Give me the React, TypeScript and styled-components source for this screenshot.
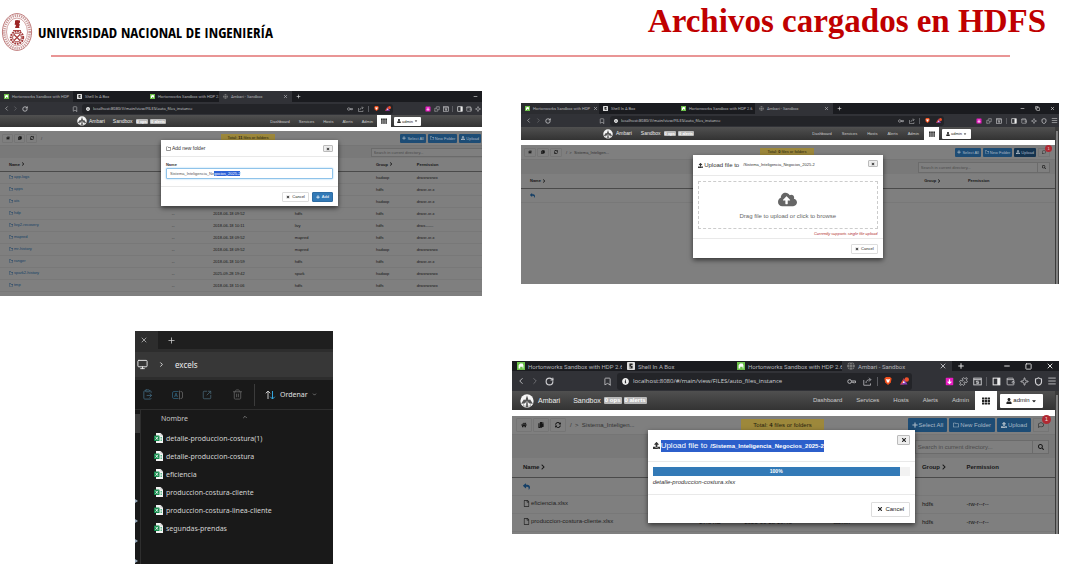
import React, { useEffect, useRef } from "react";
import styled, { createGlobalStyle, ThemeProvider, useTheme } from "styled-components";
import {
  Bookmark, ChevronLeft, ChevronRight, RotateCw, Puzzle, Wallet, Sparkle, Shield, Menu, Minus,
  Square, Copy, X, Plus, ClipboardPaste, SquareArrowOutUpRight, Trash2, Monitor, ChevronDown, ChevronUp,
} from "lucide-react";
import {
  FaHome, FaCopy, FaSyncAlt, FaReply, FaCloudUploadAlt, FaUpload, FaUser, FaTh, FaSearch,
  FaPlus, FaTimes, FaRegFolder, FaRegFile, FaRegComment, FaChevronRight, FaInfoCircle,
  FaCaretDown, FaGlobe,
} from "react-icons/fa";

const GlobalStyle = createGlobalStyle`
  *, *::before, *::after { box-sizing: border-box; }
  body { margin: 0; background: #fff; font-family: "Liberation Sans", Arial, sans-serif; }
  button, input { font: inherit; margin: 0; }
  svg { display: block; flex: none; }
`;

/* ---------- window scales ---------- */

const small = {
  font: 4, title: 5, urlFont: 4, icon: 6, tabH: 11, tabW: 73, tabPad: 4, fav: 5, barH: 13, slot: 9, left: 82, inner: 11,
  navH: 12, brandPad: 77, logo: 10, navFont: 4, linkGap: 9, gridW: 14, navRight: 77, adminH: 9, gap: 4,
  toolH: 14, box: 11, btnH: 9, btnPad: 2, searchH: 13, inputH: 9, headH: 13, rowH: 12, cellPad: 9,
  extra: 20,
};
const medium = {
  ...small,
  title: 6, tabW: 78, slot: 10, left: 89, inner: 11, navH: 13, brandPad: 82, linkGap: 10, gridW: 15,
  navRight: 84, adminH: 10, gap: 5, toolH: 14, box: 12, searchH: 15, inputH: 11, headH: 14, rowH: 14, extra: 0,
};
const large = {
  font: 6, title: 8, urlFont: 6, icon: 9, tabH: 10, tabW: 110, tabPad: 5, fav: 8, barH: 20, slot: 14, left: 105, inner: 16,
  navH: 19, brandPad: 8, logo: 14, navFont: 6, linkGap: 14, gridW: 22, navRight: 12, adminH: 14, gap: 6,
  toolH: 18, box: 16, btnH: 14, btnPad: 4, searchH: 24, inputH: 14, headH: 19, rowH: 18, cellPad: 11,
  extra: 0,
};
type Scale = typeof small;
declare module "styled-components" {
  export interface DefaultTheme extends Scale {}
}

/* ---------- slide ---------- */

const Slide = styled.main`
  min-height: 576px;
  background: #fff;
  overflow: hidden;
`;
const SlideHeader = styled.header`
  display: flex;
  justify-content: space-between;
  height: 55px;
  padding: 0 21px 0 1px;
`;
const Institution = styled.div`
  display: flex;
  align-items: center;
  gap: 5px;
  padding-top: 9px;
  font: 800 15px/18px "Open Sans Condensed", "Roboto Condensed", "Liberation Sans Narrow", sans-serif;
  color: #000;
  white-space: nowrap;
`;
const SlideTitle = styled.h1`
  margin: 2px 0 0;
  font: bold 33px/38px "Liberation Serif", "Times New Roman", serif;
  color: #c00000;
  white-space: nowrap;
`;
const Rule = styled.div`
  height: 2px;
  margin: 0 57px 0 51px;
  background: #e99595;
`;
const Columns = styled.div`
  display: grid;
  grid-template-columns: minmax(0, 482fr) minmax(0, 585fr);
`;
const LeftColumn = styled.div`
  display: flex;
  flex-direction: column;
  gap: 35px;
  padding-top: 34px;
`;
const RightColumn = styled.div`
  display: flex;
  flex-direction: column;
  gap: 77px;
  padding: 46px 8px 0 30px;
`;
const Inset = styled.div`
  padding-left: 9px;
`;

/* ---------- browser window ---------- */

const Window = styled.section`
  position: relative;
  overflow: hidden;
  font-size: ${(p) => p.theme.font}px;
  line-height: ${(p) => p.theme.font + 1}px;
  white-space: nowrap;
`;
const TabStrip = styled.div`
  display: flex;
  align-items: center;
  height: ${(p) => p.theme.tabH}px;
  background: #1a1b1f;
  color: #b4b4b8;
  font-family: Roboto, "Noto Sans", sans-serif;
`;
const Tab = styled.button<{ $tone: string }>`
  display: flex;
  align-items: center;
  gap: 3px;
  width: ${(p) => p.theme.tabW}px;
  height: 100%;
  padding: 0 ${(p) => p.theme.tabPad}px;
  border: 0;
  background: ${(p) => p.$tone};
  color: inherit;
  text-align: left;
`;
const TabLabel = styled.span`
  flex: 1;
`;
const NewTab = styled.span`
  padding-left: ${(p) => p.theme.tabPad}px;
  color: #ddd;
`;
const WindowButtons = styled.div`
  display: flex;
  align-items: center;
  gap: ${(p) => p.theme.slot}px;
  margin-left: auto;
  padding-right: ${(p) => p.theme.tabPad}px;
  color: #ddd;
`;
const AddressBar = styled.div`
  display: flex;
  align-items: center;
  height: ${(p) => p.theme.barH}px;
  background: #313237;
  color: #d0d0d3;
`;
const LeftTools = styled.div`
  display: flex;
  width: ${(p) => p.theme.left}px;
  padding: 0 3px 0 2px;
`;
const Slot = styled.span<{ $push?: boolean }>`
  display: flex;
  justify-content: center;
  align-items: center;
  width: ${(p) => p.theme.slot}px;
  margin-left: ${(p) => (p.$push ? "auto" : "0")};
`;
const Field = styled.div`
  display: flex;
  align-items: center;
  flex: 1;
  min-width: 0;
  height: ${(p) => p.theme.barH - 3}px;
  margin-right: 30px;
  border-radius: 3px;
  background: #232428;
`;
const FieldSlot = styled(Slot)`
  width: ${(p) => p.theme.inner}px;
`;
const UrlInput = styled.input`
  flex: 1;
  min-width: 0;
  height: ${(p) => p.theme.barH - 5}px;
  padding: 0;
  border: 0;
  background: none;
  color: #d0d0d4;
  font: ${(p) => p.theme.urlFont}px "Open Sans", "Noto Sans", sans-serif;
`;
const RightTools = styled.div`
  display: flex;
  align-items: center;
`;
const Divider = styled.i`
  width: 1px;
  height: ${(p) => p.theme.icon}px;
  margin: 0 2px;
  background: #5b5c61;
`;

/* ---------- Ambari ---------- */

const Page = styled.div`
  width: calc(100% + ${(p) => p.theme.extra}px);
  display: flex;
`;
const PageBody = styled.div`
  flex: 1;
  min-width: 0;
`;
const Scrollbar = styled.div`
  display: flex;
  flex-direction: column;
  width: 4px;
  background: #3b3b3b;
  padding-top: 1px;
`;
const Thumb = styled.i`
  flex: 1;
  margin: 3px 1px 0;
  background: #808080;
`;
const NavBar = styled.nav`
  display: flex;
  align-items: center;
  height: ${(p) => p.theme.navH}px;
  padding: 0 ${(p) => p.theme.navRight}px 0 ${(p) => p.theme.brandPad}px;
  background: linear-gradient(#505050, #333);
  font-size: ${(p) => p.theme.navFont}px;
`;
const Brand = styled.a`
  display: flex;
  align-items: center;
  gap: ${(p) => p.theme.gap - 2}px;
  margin-right: ${(p) => p.theme.linkGap - 1}px;
  font-size: ${(p) => p.theme.font + 1}px;
  color: #eee;
  text-decoration: none;
`;
const Badges = styled.span`
  display: flex;
  margin-left: -${(p) => p.theme.linkGap - 2}px;
`;
const CountBadge = styled.span`
  margin-left: 2px;
  padding: 0 1px;
  border-radius: 1px;
  background: #b9b9b9;
  color: #fff;
  font-weight: bold;
`;
const NavLinks = styled.div`
  display: flex;
  align-items: center;
  gap: ${(p) => p.theme.linkGap}px;
  height: 100%;
  margin-left: auto;
`;
const NavLink = styled.a`
  color: #ccc;
  text-decoration: none;
`;
const GridButton = styled.button`
  display: grid;
  place-items: center;
  width: ${(p) => p.theme.gridW}px;
  height: 100%;
  margin: 0 3px 0 ${(p) => p.theme.gap}px;
  padding: 0;
  border: 0;
  background: #fff;
  color: #222;
`;
const AdminButton = styled.button`
  display: flex;
  align-items: center;
  justify-content: center;
  gap: 1px;
  width: ${(p) => p.theme.gridW * 2 - 1}px;
  height: ${(p) => p.theme.adminH}px;
  padding: 0;
  border: 0;
  border-radius: 1px;
  background: #fff;
  color: #222;
`;
const WhiteGap = styled.div`
  height: ${(p) => p.theme.gap}px;
  background: #fff;
`;
const FilesView = styled.div<{ $height: number }>`
  min-height: ${(p) => p.$height}px;
  background: #7f7f7f;
  color: #161616;
`;
const FileToolbar = styled.div`
  display: grid;
  grid-template-columns: 1fr auto 1fr;
  align-items: center;
  height: ${(p) => p.theme.toolH}px;
  padding: 0 ${(p) => p.theme.gap}px 0 ${(p) => p.theme.gap - 2}px;
`;
const Crumbs = styled.div`
  display: flex;
  align-items: center;
  color: #333;
`;
const IconBox = styled.button`
  display: grid;
  place-items: center;
  width: ${(p) => p.theme.box}px;
  height: ${(p) => p.theme.btnH}px;
  margin-right: 1px;
  padding: 0;
  border: 1px solid #757575;
  border-radius: 1px;
  background: none;
  color: #161616;
`;
const Path = styled.span`
  padding-left: 3px;
`;
const Total = styled.div`
  padding: 0 ${(p) => p.theme.box - 4}px;
  line-height: ${(p) => p.theme.btnH - 1}px;
  background: #9d883b;
  color: #28240f;
`;
const Actions = styled.div`
  display: flex;
  justify-content: flex-end;
  gap: 2px;
`;
const Action = styled.button<{ $active?: boolean }>`
  display: flex;
  align-items: center;
  gap: 1px;
  height: ${(p) => p.theme.btnH}px;
  padding: 0 ${(p) => p.theme.btnPad}px;
  border: 0;
  border-radius: 1px;
  background: ${(p) => (p.$active ? "#14334f" : "#1d4c75")};
  color: #a9b8c5;
`;
const Messages = styled.button`
  position: relative;
  display: grid;
  place-items: center;
  width: ${(p) => p.theme.box}px;
  height: ${(p) => p.theme.btnH}px;
  padding: 0;
  border: 1px solid #757575;
  background: none;
  color: #222;
`;
const Unread = styled.span`
  position: absolute;
  top: -4px;
  right: -3px;
  width: ${(p) => p.theme.font + 3}px;
  line-height: ${(p) => p.theme.font + 3}px;
  border-radius: 50%;
  background: #b02a33;
  color: #ecd5d5;
  text-align: center;
`;
const SearchRow = styled.div`
  display: flex;
  align-items: center;
  justify-content: flex-end;
  height: ${(p) => p.theme.searchH}px;
  padding-right: ${(p) => p.theme.gap}px;
  border-top: 1px solid #757575;
  background: #797979;
`;
const SearchBox = styled.label`
  display: flex;
  align-items: center;
  width: 25%;
  height: ${(p) => p.theme.inputH}px;
  border: 1px solid #6b6b6b;
  background: #7f7f7f;
`;
const SearchInput = styled.input`
  flex: 1;
  min-width: 0;
  height: 100%;
  padding: 0 2px;
  border: 0;
  background: none;
  &::placeholder { color: #4b4b4b; }
`;
const SearchIcon = styled.span`
  display: grid;
  place-items: center;
  width: ${(p) => p.theme.box}px;
  height: 100%;
  border-left: 1px solid #6b6b6b;
`;
const FileTable = styled.table`
  width: 100%;
  table-layout: fixed;
  border-collapse: collapse;
  th, td { padding: 0; text-align: left; }
  th { height: ${(p) => p.theme.headH}px; border-bottom: 1px solid #4a4a4a; }
  td { height: ${(p) => p.theme.rowH}px; border-bottom: 1px solid #787878; }
  th:first-child, td:first-child { padding-left: ${(p) => p.theme.cellPad}px; }
`;
const Column = styled.col<{ $w: string }>`
  width: ${(p) => p.$w};
`;
const Flexed = styled.span`
  display: inline-flex;
  align-items: center;
  gap: 1px;
`;
const FolderLink = styled.a<{ $plain?: boolean }>`
  display: inline-flex;
  align-items: center;
  gap: 1px;
  color: ${(p) => (p.$plain ? "#222" : "#153f66")};
  text-decoration: none;
`;

/* ---------- dialogs ---------- */

const Dialog = styled.div<{ $top: number; $left: string; $width: string }>`
  position: absolute;
  top: ${(p) => p.$top}px;
  left: ${(p) => p.$left};
  width: ${(p) => p.$width};
  background: #fff;
  color: #333;
  box-shadow: 0 2px 5px rgba(0, 0, 0, 0.6);
`;
const DialogHead = styled.div<{ $h: number }>`
  display: flex;
  align-items: center;
  justify-content: space-between;
  height: ${(p) => p.$h}px;
  padding: 0 5px;
  border-bottom: 1px solid #e9e9e9;
  font-size: ${(p) => p.theme.title}px;
  line-height: ${(p) => p.theme.title + 2}px;
`;
const DialogTitle = styled.span`
  display: flex;
  align-items: center;
  gap: 1px;
`;
const PathName = styled.span`
  padding-left: 3px;
  font-size: ${(p) => p.theme.font}px;
`;
const Selected = styled.span`
  padding: 1px 0;
  background: #2c5fcb;
  color: #fff;
  ${PathName} { font-weight: bold; }
`;
const Close = styled.button`
  display: grid;
  place-items: center;
  align-self: flex-start;
  width: ${(p) => p.theme.icon + 4}px;
  height: ${(p) => p.theme.icon + 1}px;
  margin-top: 5px;
  padding: 0;
  border: 1px solid #bbb;
  border-radius: 1px;
  background: #eee;
  color: #222;
`;
const DialogBody = styled.div<{ $h: number }>`
  display: flex;
  flex-direction: column;
  height: ${(p) => p.$h}px;
  padding: 5px 5px 0;
  border-bottom: 1px solid #e9e9e9;
`;
const FieldLabel = styled.label`
  display: flex;
  flex-direction: column;
  gap: 1px;
  font-weight: bold;
`;
const NameInput = styled.input`
  width: 100%;
  height: 11px;
  padding: 0 3px;
  border: 1px solid #8fc3ea;
  border-radius: 1px;
  outline: 0;
  box-shadow: 0 0 2px #9accf0;
  color: #555;
  font-weight: normal;
  &::selection { background: #2c62d6; color: #fff; }
`;
const DialogFoot = styled.div<{ $h: number }>`
  display: flex;
  align-items: center;
  justify-content: flex-end;
  gap: 3px;
  height: ${(p) => p.$h}px;
  padding: 0 5px;
`;
const FootButton = styled.button<{ $primary?: boolean }>`
  display: flex;
  align-items: center;
  gap: 2px;
  height: ${(p) => p.theme.btnH + 1}px;
  padding: 0 ${(p) => p.theme.btnPad + 1}px;
  border: 1px solid ${(p) => (p.$primary ? "#2e6da4" : "#ddd")};
  border-radius: 1px;
  background: ${(p) => (p.$primary ? "#337ab7" : "#fff")};
  color: ${(p) => (p.$primary ? "#fff" : "#222")};
`;
const DropZone = styled.button`
  display: flex;
  flex-direction: column;
  align-items: center;
  justify-content: center;
  gap: 3px;
  width: 100%;
  height: 48px;
  border: 1px dashed #ccc;
  background: #fff;
  color: #666;
  font-size: ${(p) => p.theme.title}px;
  line-height: 8px;
`;
const Warning = styled.em`
  align-self: flex-end;
  padding-top: 2px;
  color: #b02a2a;
`;
const Track = styled.div`
  height: 9px;
  margin-bottom: 3px;
  background: #f2f2f2;
`;
const Fill = styled.div`
  width: 96%;
  line-height: 9px;
  background: #337ab7;
  color: #fff;
  font-size: 5px;
  font-weight: bold;
  text-align: center;
`;

/* ---------- drawings ---------- */

const Seal = () => (
  <svg width="32" height="40" viewBox="0 0 32 40" role="img" aria-label="UNI">
    <ellipse cx="16" cy="20" rx="14.6" ry="18.4" fill="#fff" stroke="#c07c7c" strokeWidth="1" />
    <ellipse cx="16" cy="20" rx="12.7" ry="16.4" fill="none" stroke="#cb9c9c" strokeWidth="2.6" strokeDasharray="1.3 .9" />
    <ellipse cx="16" cy="20" rx="10.5" ry="14" fill="#fff" stroke="#c07c7c" strokeWidth=".7" />
    <path d="M14 8.500l2-.5 3 .5v2l-1 1 1 1.500-1 1 .5 2H14l1-3-1.500-.5.500-1.500z" fill="#9c2626" />
    <path d="M12 18.500h8" stroke="#b35050" />
    <circle cx="16" cy="25.500" r="6.200" fill="none" stroke="#a43a3a" strokeWidth="2" strokeDasharray="1.800 .8" />
    <circle cx="16" cy="25.500" r="4.400" fill="none" stroke="#a43a3a" strokeWidth="1" />
    <path d="M13 28.500l6-6M13 22.500l6 6" stroke="#a43a3a" strokeWidth="1.100" />
  </svg>
);
const AmbariLogo = ({ size }: { size: number }) => (
  <svg width={size} height={size} viewBox="0 0 20 20">
    <circle cx="10" cy="10" r="9.500" fill="#f6f6f6" />
    <path d="M10 2l2.200 6.500L14.500 8l4 6-5-.5L10 10.500 6.500 13.500l-5 .5 4-6 2.300.5z" fill="#555" />
    <path d="M10 11.500l1.500 7h-3zM5 15l1 3M15 15l-1 3" fill="#555" stroke="#555" />
  </svg>
);
const Elephant = ({ size }: { size: number }) => (
  <svg width={size} height={size} viewBox="0 0 10 10">
    <rect width="10" height="10" fill="#6cc04a" />
    <path d="M2 8V4l2-2h3l1 2v4H7V6H4v2z" fill="#fff" />
  </svg>
);
const ShellIcon = ({ size }: { size: number }) => (
  <svg width={size} height={size} viewBox="0 0 10 10">
    <rect width="10" height="10" rx="1" fill="#ddd" />
    <path d="M3 2h4v2H5v1h2v3H3V7h2V6H3z" fill="#222" />
  </svg>
);
const Brave = ({ size }: { size: number }) => (
  <svg width={size} height={size} viewBox="0 0 10 10">
    <path d="M2.500 0h5L9.500 2 8.500 7 5 10 1.500 7 .5 2z" fill="#f4511e" />
    <path d="M2.500 2.500L5 3l2.500-.5L6.500 6 5 7.500 3.500 6z" fill="#fff" />
  </svg>
);
const Bat = ({ size }: { size: number }) => (
  <svg width={size + 1} height={size} viewBox="0 0 12 10">
    <path d="M5 1L0 9.500h5z" fill="#e8452c" />
    <path d="M5 1l5 8.500H0l5-3z" fill="#8b3fb5" />
    <path d="M5 4.500l1.500 3h-3z" fill="#fff" />
    <circle cx="9" cy="3" r="3" fill="#f0512b" />
  </svg>
);
const KeyIcon = ({ size }: { size: number }) => (
  <svg width={size} height={size} viewBox="0 0 12 12" fill="none" stroke="#b5b5b8" strokeWidth="1.300">
    <circle cx="3.500" cy="6" r="2.500" />
    <path d="M6 5.300h5.500V8M6 7h3.500v1.500" />
  </svg>
);
const ShareTray = ({ size }: { size: number }) => (
  <svg width={size} height={size} viewBox="0 0 12 12" fill="none" stroke="#b5b5b8" strokeWidth="1.100">
    <path d="M1 4v7h9V8.500M4 8c0-3 2-4.500 6-4.500M8 1l2.500 2.500L8 6" />
  </svg>
);
const Download = ({ size }: { size: number }) => (
  <svg width={size} height={size} viewBox="0 0 12 12">
    <rect x="1" y="1" width="10" height="10" rx="1" fill="#e81cc0" />
    <path d="M6 3v5.500M3.500 6.200L6 8.700l2.500-2.500" fill="none" stroke="#fff" strokeWidth="1.600" />
  </svg>
);
const NotesBox = ({ size }: { size: number }) => (
  <svg width={size} height={size} viewBox="0 0 12 12" fill="none" stroke="currentColor" strokeWidth="1.200">
    <rect x="1" y="1.500" width="10" height="9" />
    <path d="M1 3.500h10M7.500 5.500h-3v1.300h3v1.700h-3" />
  </svg>
);
const SidePanel = ({ size }: { size: number }) => (
  <svg width={size} height={size} viewBox="0 0 12 12">
    <rect x="1.500" y="1.500" width="9" height="9" fill="none" stroke="#eee" strokeWidth="1.300" />
    <path d="M7 1.500h3.500v9H7z" fill="#eee" />
  </svg>
);
const ExcelIcon = () => (
  <svg width="9" height="10" viewBox="0 0 18 20">
    <path d="M4 0h9l5 5v15H4z" fill="#f3f3f3" />
    <path d="M13 0v5h5" fill="#c9c9c9" />
    <rect x="0" y="5" width="11" height="11" rx="1" fill="#13894b" />
    <path d="M3 7.500l5 6M8 7.500l-5 6" stroke="#fff" strokeWidth="1.700" />
    <path d="M13 9h3M13 12h3M13 15h3" stroke="#21a366" strokeWidth="1.500" />
  </svg>
);
const SortIcon = () => (
  <svg width="11" height="10" viewBox="0 0 22 20" fill="none" strokeWidth="2">
    <path d="M6 18V2M1.500 6.500L6 2l4.500 4.500" stroke="#c8c8c8" />
    <path d="M15 2v16M10.500 13.500L15 18l4.500-4.500" stroke="#35a5dc" />
  </svg>
);
const RenameIcon = () => (
  <svg width="11" height="10" viewBox="0 0 22 20" fill="none" strokeWidth="1.600">
    <path d="M13 3H4a3 3 0 00-3 3v8a3 3 0 003 3h9M5 14l3-8 3 8M6 11.500h4" stroke="#2f5f78" />
    <path d="M15 1v18M17 3h1a3 3 0 013 3v8a3 3 0 01-3 3h-1" stroke="#666" />
  </svg>
);

/* ---------- composed browser ---------- */

const TabBar = ({ cropped }: { cropped: boolean }) => {
  const t = useTheme();
  const big = t.font > 4;
  const x = t.fav;
  return (
    <TabStrip>
      <Tab $tone={big ? "#1a1b1f" : "#2b2c30"}>
        <Elephant size={t.fav} />
        <TabLabel>Hortonworks Sandbox with HDP{big && " 2.6"}</TabLabel>
        {!big && <X size={x} strokeWidth={3} />}
      </Tab>
      <Tab $tone="#1a1b1f"><ShellIcon size={t.fav} /><TabLabel>Shell In A Box</TabLabel></Tab>
      <Tab $tone="#1a1b1f"><Elephant size={t.fav} /><TabLabel>Hortonworks Sandbox with HDP 2.6</TabLabel></Tab>
      <Tab $tone="#313237">
        <FaGlobe size={t.fav} color="#777" />
        <TabLabel>Ambari - Sandbox</TabLabel>
        <X size={x} strokeWidth={3} />
      </Tab>
      <NewTab><Plus size={x} strokeWidth={3} /></NewTab>
      <WindowButtons>
        <Minus size={x} strokeWidth={3} />
        {!cropped && (big ? <Square size={x - 1} strokeWidth={3} /> : <Copy size={x} strokeWidth={3} />)}
        {!cropped && <X size={x} strokeWidth={3} />}
      </WindowButtons>
    </TabStrip>
  );
};

const AddressRow = ({ cropped }: { cropped: boolean }) => {
  const t = useTheme();
  const s = t.icon;
  return (
    <AddressBar>
      <LeftTools>
        <Slot><ChevronLeft size={s + 1} /></Slot>
        <Slot><ChevronRight size={s + 1} color="#77787c" /></Slot>
        <Slot><RotateCw size={s} strokeWidth={3} /></Slot>
        <Slot $push><Bookmark size={s} /></Slot>
      </LeftTools>
      <Field>
        <FieldSlot><FaInfoCircle size={t.fav - 1} color="#eee" /></FieldSlot>
        <UrlInput aria-label="Dirección" defaultValue="localhost:8080/#/main/view/FILES/auto_files_instance" />
        <FieldSlot><KeyIcon size={s} /></FieldSlot>
        <FieldSlot><ShareTray size={s} /></FieldSlot>
        <Divider />
        <FieldSlot><Brave size={t.fav} /></FieldSlot>
        <FieldSlot><Bat size={t.fav} /></FieldSlot>
      </Field>
      <RightTools>
        <Slot><Download size={s} /></Slot>
        <Slot><Puzzle size={s} /></Slot>
        <Slot><NotesBox size={s} /></Slot>
        <Divider />
        <Slot><SidePanel size={s} /></Slot>
        <Slot><Wallet size={s} /></Slot>
        <Slot><Sparkle size={s} /></Slot>
        {!cropped && <Slot><Shield size={s} strokeWidth={3} /></Slot>}
        {!cropped && <Slot><Menu size={s + 1} /></Slot>}
      </RightTools>
    </AddressBar>
  );
};

type Row = { name: string; size: string; date: string; owner: string; group: string; perm: string };
type AmbariProps = {
  count: number; height: number; crumb?: string; rows: Row[]; files?: boolean; upload?: boolean;
  cropped?: boolean; children: React.ReactNode;
};

const columnWidths = ["34.5%", "8.3%", "16.4%", "16.3%", "8.2%", "16.3%"];

const AmbariWindow = ({ count, height, crumb, rows, files, upload, cropped, children }: AmbariProps) => {
  const t = useTheme();
  const s = t.font;
  return (
    <Window>
      <TabBar cropped={!!cropped} />
      <AddressRow cropped={!!cropped} />
      <Page>
        <PageBody>
          <NavBar>
            <Brand href="#"><AmbariLogo size={t.logo} />Ambari</Brand>
            <Brand as="span">Sandbox</Brand>
            <Badges><CountBadge>0 ops</CountBadge><CountBadge>0 alerts</CountBadge></Badges>
            <NavLinks>
              {["Dashboard", "Services", "Hosts", "Alerts", "Admin"].map((l) => (
                <NavLink key={l} href="#">{l}</NavLink>
              ))}
            </NavLinks>
            <GridButton aria-label="Views"><FaTh size={s + 2} /></GridButton>
            <AdminButton><FaUser size={s} />admin <FaCaretDown size={s} /></AdminButton>
          </NavBar>
          <WhiteGap />
          <FilesView $height={height}>
            <FileToolbar>
              <Crumbs>
                <IconBox aria-label="Home"><FaHome size={s} /></IconBox>
                <IconBox aria-label="Copy"><FaCopy size={s} /></IconBox>
                <IconBox aria-label="Refresh"><FaSyncAlt size={s} /></IconBox>
                <Path>/{crumb && <>&nbsp; &gt; &nbsp;{crumb}</>}</Path>
              </Crumbs>
              <Total>Total: <b>{count}</b> files or folders</Total>
              <Actions>
                <Action><FaPlus size={s} />Select All</Action>
                <Action><FaRegFolder size={s} />New Folder</Action>
                <Action $active={upload}><FaUpload size={s} />Upload</Action>
                <Messages aria-label="Messages"><FaRegComment size={s} />{!cropped && <Unread>1</Unread>}</Messages>
              </Actions>
            </FileToolbar>
            <SearchRow>
              <SearchBox>
                <SearchInput aria-label="Search" placeholder="Search in current directory..." />
                <SearchIcon><FaSearch size={s} /></SearchIcon>
              </SearchBox>
            </SearchRow>
            <FileTable>
              <colgroup>{columnWidths.map((w, i) => <Column key={i} $w={w} />)}</colgroup>
              <thead>
                <tr>
                  <th><Flexed>Name <FaChevronRight size={s} /></Flexed></th>
                  <th /><th /><th />
                  <th><Flexed>Group <FaChevronRight size={s} /></Flexed></th>
                  <th>Permission</th>
                </tr>
              </thead>
              <tbody>
                {crumb && <tr><td colSpan={6}><FaReply size={s + 1} color="#153f66" /></td></tr>}
                {rows.map((r) => (
                  <tr key={r.name}>
                    <td>
                      <FolderLink href="#" $plain={files}>
                        {files ? <FaRegFile size={s + 1} /> : <FaRegFolder size={s} />}{r.name}
                      </FolderLink>
                    </td>
                    <td>{r.size}</td><td>{r.date}</td><td>{r.owner}</td><td>{r.group}</td><td>{r.perm}</td>
                  </tr>
                ))}
              </tbody>
            </FileTable>
          </FilesView>
        </PageBody>
        <Scrollbar><Thumb /></Scrollbar>
      </Page>
      {children}
    </Window>
  );
};

const folder = (name: string, date: string, owner: string, group: string, perm: string): Row => ({
  name, size: "--", date, owner, group, perm,
});
const folders: Row[] = [
  folder("app-logs", "2018-06-18 09:52", "yarn", "hadoop", "drwxrwxrwx"),
  folder("apps", "2018-06-18 10:59", "hdfs", "hdfs", "drwxr-xr-x"),
  folder("ats", "2018-06-18 09:52", "yarn", "hadoop", "drwxr-xr-x"),
  folder("hdp", "2018-06-18 09:52", "hdfs", "hdfs", "drwxr-xr-x"),
  folder("livy2-recovery", "2018-06-18 10:11", "livy", "hdfs", "drwx------"),
  folder("mapred", "2018-06-18 09:52", "mapred", "hdfs", "drwxr-xr-x"),
  folder("mr-history", "2018-06-18 09:52", "mapred", "hadoop", "drwxrwxrwx"),
  folder("ranger", "2018-06-18 10:59", "hdfs", "hdfs", "drwxr-xr-x"),
  folder("spark2-history", "2025-09-28 19:42", "spark", "hadoop", "drwxrwxrwx"),
  folder("tmp", "2018-06-18 11:06", "hdfs", "hdfs", "drwxrwxrwx"),
];
const uploaded: Row[] = [
  { name: "eficiencia.xlsx", size: "12.1 KB", date: "2025-09-28 19:43", owner: "admin", group: "hdfs", perm: "-rw-r--r--" },
  { name: "produccion-costura-cliente.xlsx", size: "27.6 KB", date: "2025-09-28 19:43", owner: "admin", group: "hdfs", perm: "-rw-r--r--" },
];

const FolderNameField = () => {
  const ref = useRef<HTMLInputElement>(null);
  useEffect(() => {
    ref.current?.focus({ preventScroll: true });
    ref.current?.setSelectionRange(23, 36);
  }, []);
  return (
    <FieldLabel>
      Name
      <NameInput ref={ref} defaultValue="Sistema_Inteligencia_Negocios_2025-2" />
    </FieldLabel>
  );
};

/* ---------- file explorer ---------- */

const Explorer = styled.section`
  width: 41%;
  margin-left: 28%;
  background: #191919;
  color: #d4d4d4;
  font: 7px/9px "Noto Sans", "Open Sans", sans-serif;
  white-space: nowrap;
  overflow: hidden;
`;
const ExplorerTabs = styled.div`
  display: flex;
  height: 18px;
  background: #1f1f1f;
`;
const ExplorerTab = styled.div<{ $active?: boolean }>`
  display: grid;
  place-items: center;
  width: ${(p) => (p.$active ? 23 : 28)}px;
  padding-right: ${(p) => (p.$active ? 4 : 0)}px;
  background: ${(p) => (p.$active ? "#2d2d2d" : "none")};
`;
const Location = styled.div`
  display: flex;
  align-items: center;
  height: 31px;
  padding-left: 2px;
  border: solid #2d2d2d;
  border-width: 3px 0;
  background: #373737;
  color: #ececec;
  font-size: 8px;
`;
const LocationArrow = styled.span`
  padding: 0 10px;
`;
const CommandBar = styled.div`
  display: flex;
  align-items: center;
  height: 30px;
  padding-left: 7px;
  border-bottom: 1px solid #2e2e2e;
  color: #5b5b5b;
`;
const Command = styled.button`
  display: flex;
  width: 30px;
  padding: 0;
  border: 0;
  background: none;
  color: inherit;
`;
const SortButton = styled.button`
  display: flex;
  align-items: center;
  gap: 4px;
  height: 22px;
  margin-left: -8px;
  padding: 0 0 0 10px;
  border: 0;
  border-left: 1px solid #3b3b3b;
  background: none;
  color: #e0e0e0;
`;
const ExplorerBody = styled.div`
  display: flex;
  min-height: 154px;
`;
const SideRail = styled.div`
  display: flex;
  flex-direction: column;
  justify-content: space-between;
  width: 6px;
  padding-top: 4px;
  border-right: 1px solid #2e2e2e;
`;
const RailThumb = styled.i`
  width: 5px;
  height: 19px;
  background: #3a3a3a;
`;
const Pins = styled.div`
  display: grid;
  row-gap: 14px;
`;
const FileList = styled.div`
  flex: 1;
`;
const ColumnHead = styled.div`
  display: flex;
  gap: 54px;
  padding: 4px 0 5px 20px;
  line-height: 10px;
  color: #c4c4c4;
`;
const Files = styled.ul`
  margin: 0;
  padding: 0 0 0 13px;
  list-style: none;
`;
const FileItem = styled.li`
  display: flex;
  align-items: center;
  gap: 3px;
  height: 18px;
`;

const excelFiles = [
  "detalle-produccion-costura(1)", "detalle-produccion-costura", "eficiencia",
  "produccion-costura-cliente", "produccion-costura-linea-cliente", "segundas-prendas",
];

const ExplorerWindow = () => (
  <Explorer>
    <ExplorerTabs>
      <ExplorerTab $active><X size={8} /></ExplorerTab>
      <ExplorerTab><Plus size={9} /></ExplorerTab>
    </ExplorerTabs>
    <Location>
      <Monitor size={11} />
      <LocationArrow><ChevronRight size={7} strokeWidth={3} /></LocationArrow>
      excels
    </Location>
    <CommandBar>
      <Command aria-label="Pegar"><ClipboardPaste size={11} color="#3d6075" /></Command>
      <Command aria-label="Cambiar nombre"><RenameIcon /></Command>
      <Command aria-label="Compartir"><SquareArrowOutUpRight size={10} color="#456070" /></Command>
      <Command aria-label="Eliminar"><Trash2 size={11} /></Command>
      <SortButton><SortIcon />Ordenar <ChevronDown size={5} /></SortButton>
    </CommandBar>
    <ExplorerBody>
      <SideRail>
        <RailThumb />
        <Pins>{[0, 1, 2, 3].map((i) => (
          <svg key={i} width="4" height="6" viewBox="0 0 4 6"><path d="M0 1l3 2-3 2z" fill="#9ab" /></svg>
        ))}</Pins>
      </SideRail>
      <FileList>
        <ColumnHead>Nombre <ChevronUp size={6} /></ColumnHead>
        <Files>
          {excelFiles.map((f) => <FileItem key={f}><ExcelIcon />{f}</FileItem>)}
        </Files>
      </FileList>
    </ExplorerBody>
  </Explorer>
);

/* ---------- page ---------- */

export default function App() {
  return (
    <Slide>
      <GlobalStyle />
      <SlideHeader>
        <Institution><Seal />UNIVERSIDAD NACIONAL DE INGENIERÍA</Institution>
        <SlideTitle>Archivos cargados en HDFS</SlideTitle>
      </SlideHeader>
      <Rule />
      <Columns>
        <LeftColumn>
          <ThemeProvider theme={small}>
            <AmbariWindow count={11} height={165} rows={folders} cropped>
              <Dialog role="dialog" $top={49} $left="33.4%" $width="36.7%">
                <DialogHead $h={17}>
                  <DialogTitle><FaRegFolder size={5} />Add new folder</DialogTitle>
                  <Close aria-label="Close"><FaTimes size={4} /></Close>
                </DialogHead>
                <DialogBody $h={30}><FolderNameField /></DialogBody>
                <DialogFoot $h={19}>
                  <FootButton><FaTimes size={4} />Cancel</FootButton>
                  <FootButton $primary><FaPlus size={4} />Add</FootButton>
                </DialogFoot>
              </Dialog>
            </AmbariWindow>
          </ThemeProvider>
          <ExplorerWindow />
        </LeftColumn>
        <RightColumn>
          <Inset>
            <ThemeProvider theme={medium}>
              <AmbariWindow count={0} height={139} crumb="Sistema_Inteligen..." rows={[]} upload>
                <Dialog role="dialog" $top={52} $left="32%" $width="35.2%">
                  <DialogHead $h={21}>
                    <DialogTitle><FaUpload size={5} />Upload file to<PathName>/Sistema_Inteligencia_Negocios_2025-2</PathName></DialogTitle>
                    <Close aria-label="Close"><FaTimes size={4} /></Close>
                  </DialogHead>
                  <DialogBody $h={63}>
                    <DropZone><FaCloudUploadAlt size={19} />Drag file to upload or click to browse</DropZone>
                    <Warning>Currently supports single file upload</Warning>
                  </DialogBody>
                  <DialogFoot $h={19}>
                    <FootButton><FaTimes size={4} />Cancel</FootButton>
                  </DialogFoot>
                </Dialog>
              </AmbariWindow>
            </ThemeProvider>
          </Inset>
          <ThemeProvider theme={large}>
            <AmbariWindow count={4} height={118} crumb="Sistema_Inteligen..." rows={uploaded} files>
              <Dialog role="dialog" $top={69} $left="24.8%" $width="48.9%">
                <DialogHead $h={32}>
                  <DialogTitle><FaUpload size={7} /><Selected>Upload file to<PathName>/Sistema_Inteligencia_Negocios_2025-2</PathName></Selected></DialogTitle>
                  <Close aria-label="Close"><FaTimes size={6} /></Close>
                </DialogHead>
                <DialogBody $h={33}>
                  <Track><Fill>100%</Fill></Track>
                  <em>detalle-produccion-costura.xlsx</em>
                </DialogBody>
                <DialogFoot $h={28}>
                  <FootButton><FaTimes size={6} />Cancel</FootButton>
                </DialogFoot>
              </Dialog>
            </AmbariWindow>
          </ThemeProvider>
        </RightColumn>
      </Columns>
    </Slide>
  );
}
